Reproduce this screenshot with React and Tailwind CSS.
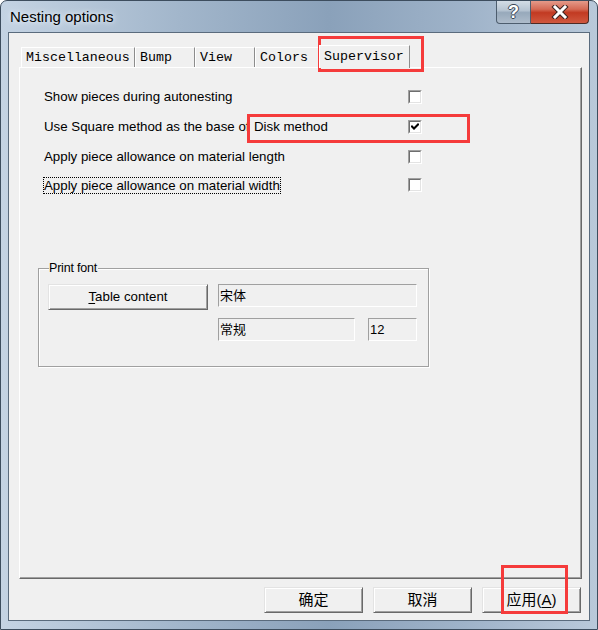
import React from 'react';

const UI = { fontFamily: '"Liberation Sans", Arial, sans-serif' };
const MONO = { fontFamily: '"Liberation Mono", "Courier New", monospace' };
const CJK = { fontFamily: '"Liberation Sans", "Noto Sans CJK SC", sans-serif' };

const TABS = [
  { label: 'Miscellaneous', w: 'w-[114px]' },
  { label: 'Bump', w: 'w-[60px]' },
  { label: 'View', w: 'w-[60px]' },
  { label: 'Colors', w: 'w-[64px]' },
];

function Tab({ label, w }) {
  return (
    <div className={`${w} h-[20px] border-t border-l border-[#fff] border-r border-r-[#8c8c8c] bg-[#f0f0f0] pl-[4px] text-[13.3px] leading-[19px] text-black`} style={MONO}>
      {label}
    </div>
  );
}

function Checkbox({ checked }) {
  return (
    <div className="w-[14px] h-[14px] border-t border-l border-[#a0a0a0] border-r border-b border-r-[#fff] border-b-[#fff]">
      <div className="w-full h-full border-t border-l border-[#6e6e6e] border-r border-b border-r-[#e3e3e3] border-b-[#e3e3e3] bg-white flex items-center justify-center">
        {checked && (
          <svg width="8" height="8" viewBox="0 0 8 8">
            <path d="M1 3.5 L3 5.5 L7 1.5" stroke="#000" strokeWidth="2" fill="none" strokeLinecap="square" />
          </svg>
        )}
      </div>
    </div>
  );
}

function Button({ className = '', children, style }) {
  return (
    <div
      className={`border border-[#e3e3e3] border-r-[#696969] border-b-[#696969] shadow-[inset_1px_1px_0_#fff,inset_-1px_-1px_0_#a0a0a0] bg-[#f0f0f0] flex items-center justify-center text-black ${className}`}
      style={style}
    >
      {children}
    </div>
  );
}

function Field({ className = '', children }) {
  return (
    <div className={`border border-[#a0a0a0] border-r-[#fff] border-b-[#fff] pl-[1px] pt-[3px] text-[13px] leading-[15px] text-black ${className}`} style={CJK}>
      {children}
    </div>
  );
}

function Row({ children, checked, className = '' }) {
  return (
    <div className={`flex items-center h-[20px] ${className}`}>
      <div className="w-[364px] flex items-center">{children}</div>
      <Checkbox checked={checked} />
    </div>
  );
}

export default function App() {
  return (
    <div className="w-[598px] h-[630px] overflow-hidden relative rounded-t-[7px] border border-[#3d4d5e] bg-[linear-gradient(90deg,#c4d3e3_0%,#a2b6cb_30%,#8aa1ba_55%,#9fb3c9_78%,#b9c9da_100%)] flex flex-col" style={UI}>
      {/* title bar */}
      <div className="h-[31px] flex items-start relative">
        <div className="pl-[9px] pt-[6px] text-[15px] leading-[20px] text-black [text-shadow:0_0_8px_#e6eef7,0_0_4px_#e6eef7]">Nesting options</div>
        <div className="ml-auto mr-[8px] flex -mt-[1px]">
          <div className="w-[35px] h-[24px] rounded-bl-[4px] border border-[#4d5d6e] border-t-0 bg-[linear-gradient(#d6dfe8,#b6c4d2_45%,#97a9bb_55%,#aebccb)] flex items-center justify-center">
            <span className="text-[18px] font-bold leading-none text-white [text-shadow:-1px_0_#3a4654,1px_0_#3a4654,0_-1px_#3a4654,0_1px_#3a4654]" style={UI}>?</span>
          </div>
          <div className="w-[58px] h-[24px] rounded-br-[4px] border border-[#4d2a24] border-t-0 border-l-0 bg-[linear-gradient(#e6a090,#d46a55_40%,#c23a22_55%,#d0583f)] flex items-center justify-center">
            <svg width="18" height="14" viewBox="0 0 18 14">
              <path d="M4 2 L14 12 M14 2 L4 12" stroke="#3b2320" strokeWidth="5" strokeLinecap="square" />
              <path d="M4 2 L14 12 M14 2 L4 12" stroke="#fff" strokeWidth="3" strokeLinecap="square" />
            </svg>
          </div>
        </div>
      </div>

      {/* client area */}
      <div className="mx-[7px] h-[589px] border border-[#5a6b7d] bg-[#f0f0f0] flex flex-col">
        <div className="pl-[10px] pt-[12px]">
          <div className="flex items-end h-[22px] pl-[2px]">
            {TABS.map(t => <Tab key={t.label} {...t} />)}
            <div className="relative z-10 -mb-[1px] w-[91px] h-[23px] border-t border-l border-[#fff] border-r border-r-[#8c8c8c] bg-[#f0f0f0] pl-[4px] pt-[1px] text-[13.3px] leading-[19px] text-black" style={MONO}>
              Supervisor
            </div>
          </div>

          {/* Supervisor page */}
          <div className="w-[563px] h-[512px] border-t border-l border-[#fff] border-r border-b border-r-[#696969] border-b-[#696969] shadow-[inset_-1px_-1px_0_#a0a0a0] pl-[24px] pt-[19px] text-[13.3px] text-black">
            <Row>Show pieces during autonesting</Row>
            <Row checked className="mt-[10px]">
              <span className="w-[210px] overflow-hidden whitespace-nowrap">Use Square method as the base of</span>
              <span className="whitespace-nowrap">Disk method</span>
            </Row>
            <Row className="mt-[10px]">Apply piece allowance on material length</Row>
            <Row className="mt-[8px]">
              <span className="border border-dotted border-black px-0 leading-[15px] -ml-[1px]">Apply piece allowance on material width</span>
            </Row>

            {/* font group */}
            <div className="relative mt-[73px] -ml-[6px] w-[391px] h-[99px] border border-[#a0a0a0] shadow-[1px_1px_0_#fff,inset_1px_1px_0_#fff]">
              <span className="absolute -top-[8px] left-[10px] bg-[#f0f0f0] pr-[1px] text-[12.5px] leading-[14px] tracking-[-0.2px]">Print font</span>
              <div className="flex gap-[10px] pl-[9px] pt-[15px]">
                <Button className="w-[160px] h-[26px] text-[13.3px]">
                  <span><span className="underline underline-offset-2">T</span>able content</span>
                </Button>
                <div className="flex flex-col gap-[11px]">
                  <Field className="w-[199px] h-[23px]">宋体</Field>
                  <div className="flex gap-[13px]">
                    <Field className="w-[137px] h-[23px]">常规</Field>
                    <Field className="w-[49px] h-[23px]">12</Field>
                  </div>
                </div>
              </div>
            </div>
          </div>
        </div>

        {/* dialog buttons */}
        <div className="flex justify-end gap-[10px] pr-[8px] mt-[8px]">
          <Button className="w-[99px] h-[26px] text-[15px]" style={CJK}>确定</Button>
          <Button className="w-[99px] h-[26px] text-[15px]" style={CJK}>取消</Button>
          <Button className="w-[99px] h-[26px] text-[15px]" style={CJK}>
            <span>应用(<span className="underline underline-offset-2">A</span>)</span>
          </Button>
        </div>
      </div>

      {/* red callouts */}
      <div className="absolute left-[317px] top-[35px] w-[106px] h-[36px] border-[3px] border-[#f53b3b]" />
      <div className="absolute left-[246px] top-[113px] w-[223px] h-[29px] border-[3px] border-[#f53b3b]" />
      <div className="absolute left-[500px] top-[564px] w-[67px] h-[49px] border-[3px] border-[#f53b3b]" />
    </div>
  );
}
